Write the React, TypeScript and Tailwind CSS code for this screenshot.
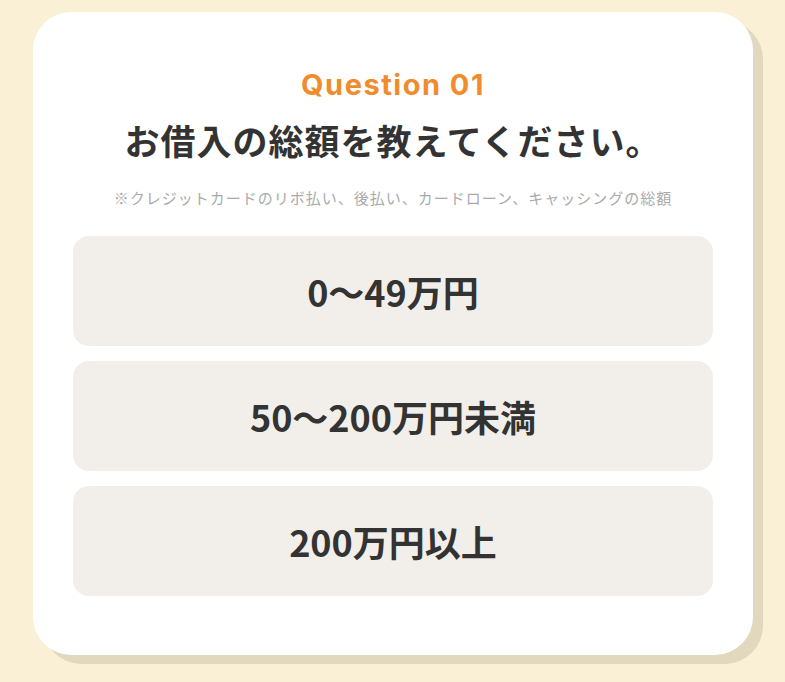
const options = ['0〜49万円', '50〜200万円未満', '200万円以上']

const jp = '"Noto Sans CJK JP", "Noto Sans", sans-serif'

export default function App() {
  return (
    <div className="min-h-screen w-full bg-[#faf0d6] pt-[12px] pl-[33px]" style={{ fontFamily: jp }}>
      <div className="w-[720px] rounded-[38px] bg-white px-[40px] pt-[53px] pb-[59px] shadow-[10px_9px_0_0_#e2d8bd]">
        <p className="text-center text-[29px] leading-[40px] font-bold tracking-[1.5px] text-[#f08c2e]" style={{ fontFamily: 'Inter, "Liberation Sans", sans-serif' }}>
          Question 01
        </p>
        <h1 className="mt-[11px] text-center text-[35px] leading-[48px] font-bold tracking-[1px] text-[#333333]">
          お借入の総額を教えてください。
        </h1>
        <p className="mt-[24px] text-center text-[15px] leading-[20px] tracking-[1px] text-[#aaaaaa]">
          ※クレジットカードのリボ払い、後払い、カードローン、キャッシングの総額
        </p>
        <div className="mt-[28px] flex flex-col gap-[15px]">
          {options.map(o => (
            <button
              key={o}
              className="flex h-[110px] w-full items-center justify-center rounded-[16px] bg-[#f2efea] text-[36px] font-bold text-[#333333]"
            >
              {o}
            </button>
          ))}
        </div>
      </div>
    </div>
  )
}
